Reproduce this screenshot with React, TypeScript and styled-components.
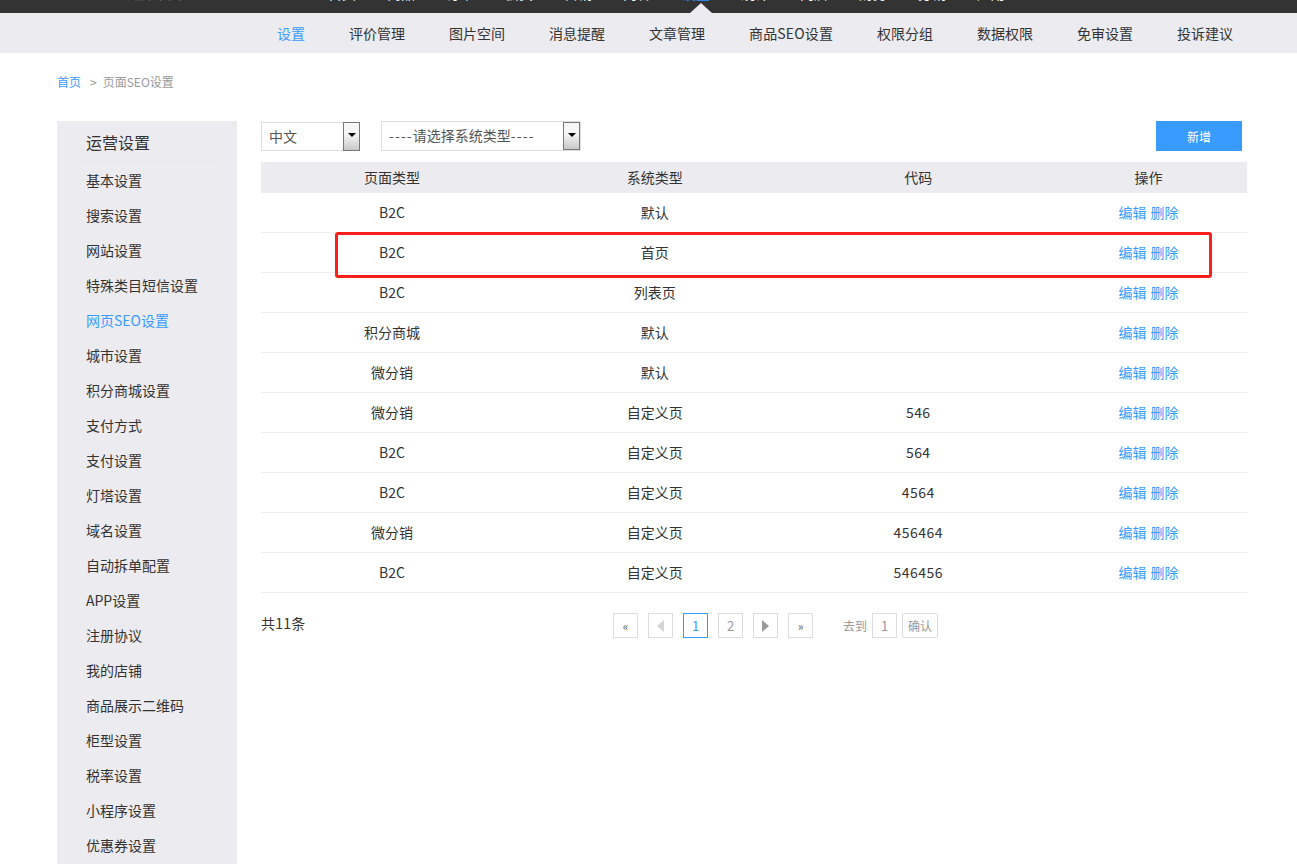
import React from 'react';
import styled, { createGlobalStyle } from 'styled-components';

const GlobalStyle = createGlobalStyle`
  html, body {
    margin: 0;
    height: 864px;
    overflow: hidden;
    background: #fff;
    font-family: "Noto Sans CJK SC", "Noto Sans", sans-serif;
    color: #333;
  }
`;

const BLUE = '#3a9bff';
const GREY_BG = '#ecebf0';

const TopBar = styled.div`
  height: 13px;
  background: #333;
  display: flex;
  padding-left: 127px;
  overflow: hidden;
  position: relative;
`;

const Logo = styled.div`
  width: 201px;
  margin-top: -19px;
  font-size: 18px;
  line-height: 20px;
  letter-spacing: 1px;
  color: #777;
  white-space: nowrap;
`;

const TopNav = styled.div`
  display: flex;
  gap: 31px;
  margin-top: -17px;
`;

const TopLink = styled.span<{ $active?: boolean }>`
  font-size: 14px;
  line-height: 20px;
  color: ${p => (p.$active ? '#2f8fff' : '#fff')};
`;

const Caret = styled.div`
  position: absolute;
  left: 690px;
  bottom: 0;
  width: 0;
  height: 0;
  border-left: 11.5px solid transparent;
  border-right: 11.5px solid transparent;
  border-bottom: 10px solid ${GREY_BG};
`;

const SubNav = styled.div`
  height: 40px;
  background: ${GREY_BG};
  display: flex;
  align-items: center;
  gap: 44px;
  padding-left: 277px;
`;

const SubLink = styled.a<{ $active?: boolean; $latin?: boolean }>`
  font-size: 14px;
  line-height: 20px;
  color: ${p => (p.$active ? BLUE : '#333')};
  letter-spacing: ${p => (p.$latin ? '0.15px' : 'normal')};
`;

const Breadcrumb = styled.div`
  height: 48px;
  padding: 20px 0 0 57px;
  font-size: 12px;
  line-height: 18px;
  color: #999;
  display: flex;
`;

const CrumbLink = styled.a`
  color: ${BLUE};
`;

const CrumbSep = styled.span`
  margin: 0 6px 0 9px;
`;

const Body = styled.div`
  display: flex;
  gap: 24px;
  padding-left: 57px;
`;

const Sidebar = styled.aside`
  width: 180px;
  height: 760px;
  background: ${GREY_BG};
  flex-shrink: 0;
`;

const SideTitle = styled.div`
  margin: 0 20px 1px;
  padding: 9px 0 7px 9px;
  font-size: 16px;
  line-height: 24px;
  border-bottom: 1px solid #e6e6e6;
`;

const SideItem = styled.div<{ $active?: boolean }>`
  padding-left: 29px;
  height: 35px;
  line-height: 35px;
  font-size: 14px;
  color: ${p => (p.$active ? BLUE : '#333')};
`;

const Main = styled.main`
  width: 986px;
`;

const Toolbar = styled.div`
  height: 41px;
  display: flex;
  align-items: flex-start;
  gap: 21px;
`;

const SelectBox = styled.div<{ $width: number; $tall?: boolean }>`
  width: ${p => p.$width}px;
  height: ${p => (p.$tall ? 30 : 29)}px;
  margin-top: ${p => (p.$tall ? 0 : 1)}px;
  box-sizing: border-box;
  border: 1px solid #ddd;
  display: flex;
  justify-content: space-between;
  padding-left: 7px;
  font-size: 14px;
  line-height: 27px;
  color: #555;
`;

const Dashes = styled.span`
  letter-spacing: 1.1px;
`;

const SelectArrow = styled.div<{ $inset?: boolean }>`
  width: 17px;
  box-sizing: border-box;
  border: 1px solid #777;
  margin: ${p => (p.$inset ? '0' : '-1px -1px 0 0')};
  height: ${p => (p.$inset ? 28 : 29)}px;
  background: linear-gradient(#f6f6f6 40%, #c8c8c8);
  display: flex;
  align-items: center;
  justify-content: center;
  padding-bottom: 3px;

  &::after {
    content: '';
    border-left: 4px solid transparent;
    border-right: 4px solid transparent;
    border-top: 4px solid #000;
  }
`;

const AddButton = styled.button`
  margin: 0 5px 0 auto;
  width: 86px;
  height: 30px;
  border: 0;
  padding: 0;
  background: ${BLUE};
  color: #fff;
  font-family: inherit;
  font-size: 12px;
`;

const TableWrap = styled.div`
  position: relative;
`;

const Row = styled.div<{ $head?: boolean }>`
  display: grid;
  grid-template-columns: 262px 263.5px 263.5px 197px;
  height: ${p => (p.$head ? 31 : 40)}px;
  box-sizing: border-box;
  background: ${p => (p.$head ? GREY_BG : 'transparent')};
  border-bottom: ${p => (p.$head ? 'none' : '1px solid #eee')};
  font-size: 14px;
  line-height: ${p => (p.$head ? 31 : 39)}px;
  text-align: center;
`;

const CodeCell = styled.div`
  letter-spacing: 0.45px;
`;

const ActionLink = styled.a`
  color: ${BLUE};
  font-size: 14px;
  margin: 0 2px;
`;

const Highlight = styled.div`
  position: absolute;
  left: 74px;
  top: 70px;
  width: 877px;
  height: 46px;
  box-sizing: border-box;
  border: 3px solid #ff1f1a;
  border-radius: 3px;
  pointer-events: none;
`;

const Footer = styled.div`
  display: flex;
  padding-top: 20px;
`;

const Total = styled.div`
  width: 352px;
  font-size: 14px;
  line-height: 20px;
  letter-spacing: 0.2px;
`;

const Pager = styled.div`
  display: flex;
  gap: 10px;
`;

const PageBox = styled.div<{ $active?: boolean; $dark?: boolean }>`
  width: 25px;
  height: 25px;
  box-sizing: border-box;
  border: 1px solid ${p => (p.$active ? BLUE : '#ddd')};
  color: ${p => (p.$active ? BLUE : p.$dark ? '#666' : '#999')};
  font-size: ${p => (p.$dark ? 12 : 13)}px;
  line-height: 23px;
  text-align: center;
  display: flex;
  align-items: center;
  justify-content: center;
`;

const Tri = styled.span<{ $dir: 'left' | 'right'; $off?: boolean }>`
  border-top: 6px solid transparent;
  border-bottom: 6px solid transparent;
  ${p => (p.$dir === 'left' ? 'border-right' : 'border-left')}: 7px solid ${p => (p.$off ? '#d4d4d4' : '#999')};
`;

const Jump = styled.div`
  display: flex;
  align-items: center;
  gap: 5px;
  margin-left: 30px;
  font-size: 12px;
  color: #999;
`;

const ConfirmBtn = styled.div`
  width: 36px;
  height: 25px;
  box-sizing: border-box;
  border: 1px solid #ddd;
  border-radius: 2px;
  font-size: 12px;
  line-height: 23px;
  text-align: center;
  color: #999;
`;

const topLinks = ['首页', '商品', '订单', '会员', '营销', '内容', '设置', '统计', '门店', '财务', '分销', '应用'];
const subLinks = ['设置', '评价管理', '图片空间', '消息提醒', '文章管理', '商品SEO设置', '权限分组', '数据权限', '免审设置', '投诉建议'];
const sideLinks = [
  '基本设置', '搜索设置', '网站设置', '特殊类目短信设置', '网页SEO设置', '城市设置', '积分商城设置', '支付方式',
  '支付设置', '灯塔设置', '域名设置', '自动拆单配置', 'APP设置', '注册协议', '我的店铺', '商品展示二维码',
  '柜型设置', '税率设置', '小程序设置', '优惠券设置',
];
const rows = [
  ['B2C', '默认', ''],
  ['B2C', '首页', ''],
  ['B2C', '列表页', ''],
  ['积分商城', '默认', ''],
  ['微分销', '默认', ''],
  ['微分销', '自定义页', '546'],
  ['B2C', '自定义页', '564'],
  ['B2C', '自定义页', '4564'],
  ['微分销', '自定义页', '456464'],
  ['B2C', '自定义页', '546456'],
];

export default function App() {
  return (
    <>
      <GlobalStyle />
      <TopBar>
        <Logo>运营管理</Logo>
        <TopNav>
          {topLinks.map((t, i) => (
            <TopLink key={t} $active={i === 6}>{t}</TopLink>
          ))}
        </TopNav>
        <Caret />
      </TopBar>
      <SubNav>
        {subLinks.map((t, i) => (
          <SubLink key={t} $active={i === 0} $latin={t.includes('SEO')}>{t}</SubLink>
        ))}
      </SubNav>
      <Breadcrumb>
        <CrumbLink>首页</CrumbLink>
        <CrumbSep>&gt;</CrumbSep>
        <span>页面SEO设置</span>
      </Breadcrumb>
      <Body>
        <Sidebar>
          <SideTitle>运营设置</SideTitle>
          {sideLinks.map(t => (
            <SideItem key={t} $active={t === '网页SEO设置'}>{t}</SideItem>
          ))}
        </Sidebar>
        <Main>
          <Toolbar>
            <SelectBox $width={99}>
              中文
              <SelectArrow />
            </SelectBox>
            <SelectBox $width={200} $tall>
              <span><Dashes>----</Dashes>请选择系统类型<Dashes>----</Dashes></span>
              <SelectArrow $inset />
            </SelectBox>
            <AddButton>新增</AddButton>
          </Toolbar>
          <TableWrap>
            <Row $head>
              <div>页面类型</div>
              <div>系统类型</div>
              <div>代码</div>
              <div>操作</div>
            </Row>
            {rows.map((r, i) => (
              <Row key={i}>
                <div>{r[0]}</div>
                <div>{r[1]}</div>
                <CodeCell>{r[2]}</CodeCell>
                <div>
                  <ActionLink>编辑</ActionLink>
                  <ActionLink>删除</ActionLink>
                </div>
              </Row>
            ))}
            <Highlight />
          </TableWrap>
          <Footer>
            <Total>共11条</Total>
            <Pager>
              <PageBox $dark>«</PageBox>
              <PageBox><Tri $dir="left" $off /></PageBox>
              <PageBox $active>1</PageBox>
              <PageBox>2</PageBox>
              <PageBox><Tri $dir="right" /></PageBox>
              <PageBox $dark>»</PageBox>
            </Pager>
            <Jump>
              去到
              <PageBox>1</PageBox>
              <ConfirmBtn>确认</ConfirmBtn>
            </Jump>
          </Footer>
        </Main>
      </Body>
    </>
  );
}
